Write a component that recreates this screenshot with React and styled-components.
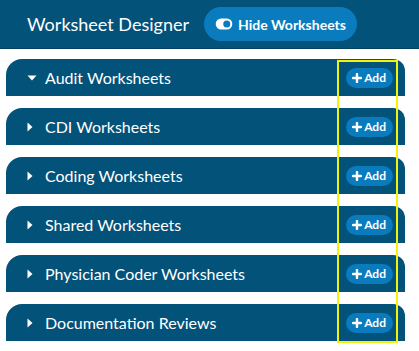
import styled, { createGlobalStyle } from "styled-components";

const GlobalStyle = createGlobalStyle`
  body {
    margin: 0;
    background: #ffffff;
    font-family: Lato, "Open Sans", sans-serif;
  }
`;

const Page = styled.div`
  position: relative;
  width: 419px;
  height: 351px;
  overflow: hidden;
`;

const Header = styled.header`
  display: flex;
  align-items: center;
  gap: 15px;
  height: 48px;
  padding-left: 27px;
  background: #03527a;
  border-bottom: 1px solid #033f5f;
`;

const Title = styled.h1`
  margin: 0;
  font-size: 18px;
  font-weight: 400;
  color: #ffffff;
`;

const ToggleButton = styled.button`
  display: flex;
  align-items: center;
  gap: 5px;
  height: 34px;
  padding: 0 11px 0 11px;
  border: none;
  border-radius: 17px;
  background: #0a7cbe;
  color: #ffffff;
  font-family: inherit;
  font-size: 14px;
  font-weight: 700;
`;

const List = styled.div`
  display: flex;
  flex-direction: column;
  gap: 12px;
  padding: 10px 14px 0 6px;
`;

const Row = styled.div`
  display: flex;
  align-items: center;
  height: 37px;
  padding: 0 12px 0 21px;
  border-radius: 16px 12px 0 0;
  background: #03527a;
  color: #ffffff;
`;

const Caret = styled.span`
  display: flex;
  width: 18px;
`;

const Label = styled.span`
  flex: 1;
  font-size: 16px;
`;

const AddButton = styled.button`
  display: flex;
  align-items: center;
  gap: 2px;
  height: 20px;
  padding: 0 7px 0 6px;
  border: none;
  border-radius: 10px;
  background: #0a7cbe;
  color: #ffffff;
  font-family: inherit;
  font-size: 12px;
  font-weight: 700;
`;

const Highlight = styled.div`
  position: absolute;
  left: 337px;
  top: 60px;
  width: 57px;
  height: 279px;
  border: 2px solid #f2f20c;
  pointer-events: none;
`;

const ToggleIcon = () => (
  <svg width="18" height="12" viewBox="0 0 19 13">
    <rect x="0.5" y="0.5" width="18" height="12" rx="6" fill="#fff" />
    <circle cx="12.5" cy="6.5" r="3.8" fill="#0a7cbe" />
  </svg>
);

const PlusIcon = () => (
  <svg width="10" height="10" viewBox="0 0 10 10">
    <path d="M5 1v8M1 5h8" stroke="#fff" strokeWidth="2.4" strokeLinecap="round" />
  </svg>
);

const CaretIcon = ({ open }) =>
  open ? (
    <svg width="10" height="6" viewBox="0 0 10 6">
      <path d="M0.5 0.5h9L5 5.5z" fill="#fff" />
    </svg>
  ) : (
    <svg width="6" height="10" viewBox="0 0 6 10">
      <path d="M0.5 0.5v9L5.5 5z" fill="#fff" />
    </svg>
  );

const sections = [
  { name: "Audit Worksheets", open: true },
  { name: "CDI Worksheets" },
  { name: "Coding Worksheets" },
  { name: "Shared Worksheets" },
  { name: "Physician Coder Worksheets" },
  { name: "Documentation Reviews" },
];

export default function App() {
  return (
    <Page>
      <GlobalStyle />
      <Header>
        <Title>Worksheet Designer</Title>
        <ToggleButton>
          <ToggleIcon />
          Hide Worksheets
        </ToggleButton>
      </Header>
      <List>
        {sections.map((s) => (
          <Row key={s.name}>
            <Caret>
              <CaretIcon open={s.open} />
            </Caret>
            <Label>{s.name}</Label>
            <AddButton>
              <PlusIcon />
              Add
            </AddButton>
          </Row>
        ))}
      </List>
      <Highlight />
    </Page>
  );
}
